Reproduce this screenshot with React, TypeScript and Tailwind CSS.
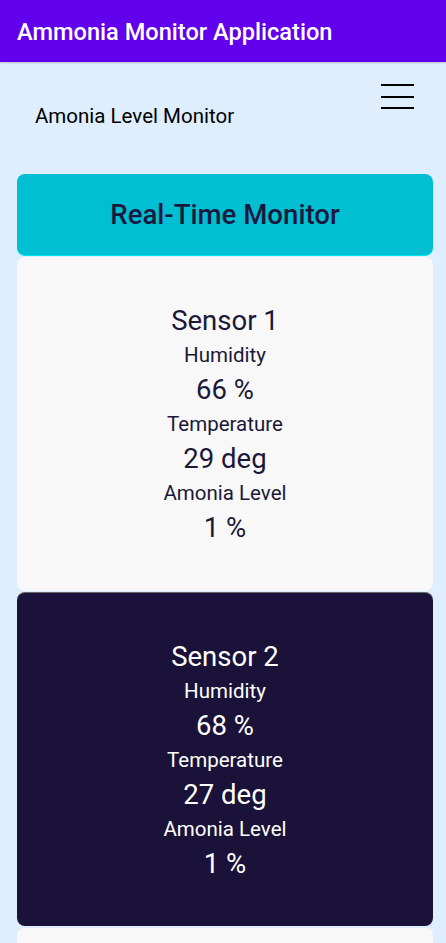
import React from "react";

function SensorCard({ name, hum, temp, amo, dark }: { name: string; hum: string; temp: string; amo: string; dark?: boolean }) {
  const c = dark ? "text-white" : "text-[#1b1838]";
  return (
    <div className={`${dark ? "bg-[#1a1239] border-t border-[#6b6b6b]" : "bg-[#f8f8f8]"} rounded-[8px] h-[334px] flex flex-col items-center pt-[47px] ${c}`}>
      <div className="text-[27.5px] leading-[34px] h-[34px]">{name}</div>
      <div className="text-[20.5px] leading-[34px] h-[34px]">Humidity</div>
      <div className="text-[27.5px] leading-[35px] h-[35px]">{hum}</div>
      <div className="text-[20.5px] leading-[34px] h-[34px]">Temperature</div>
      <div className="text-[27.5px] leading-[35px] h-[35px]">{temp}</div>
      <div className="text-[20.5px] leading-[34px] h-[34px]">Amonia Level</div>
      <div className="text-[27.5px] leading-[35px] h-[35px]">{amo}</div>
    </div>
  );
}

export default function App() {
  return (
    <div className="w-[446px] h-[943px] overflow-hidden bg-[#deeeff]" style={{ fontFamily: "Roboto, 'Liberation Sans', sans-serif" }}>
      <div className="h-[62px] bg-[#6200ee] flex items-center px-[17px] pt-[3px] shadow-[0_1px_2px_rgba(0,0,0,0.2)]">
        <span className="text-white text-[23.6px] font-medium">Ammonia Monitor Application</span>
      </div>
      <div className="relative h-[112px]">
        <div className="absolute left-[35px] top-[41px] text-[20.5px] font-normal text-black leading-[26px]">Amonia Level Monitor</div>
        <div className="absolute left-[381px] top-[22px] w-[33px] flex flex-col gap-[9.5px]">
          <div className="h-[2px] bg-black" />
          <div className="h-[2px] bg-black" />
          <div className="h-[2px] bg-black" />
        </div>
      </div>
      <div className="pl-[17px] pr-[13px] flex flex-col gap-[1px]">
        <div className="h-[82px] rounded-[8px] bg-[#00bfd2] flex items-center justify-center border-b border-[#00e5f0]">
          <span className="text-[27.6px] font-medium text-[#1b1840]">Real-Time Monitor</span>
        </div>
        <SensorCard name="Sensor 1" hum="66 %" temp="29 deg" amo="1 %" />
        <SensorCard name="Sensor 2" hum="68 %" temp="27 deg" amo="1 %" dark />
        <div className="h-[40px] rounded-[8px] bg-[#f8f8f8] mt-[1px]" />
      </div>
    </div>
  );
}
